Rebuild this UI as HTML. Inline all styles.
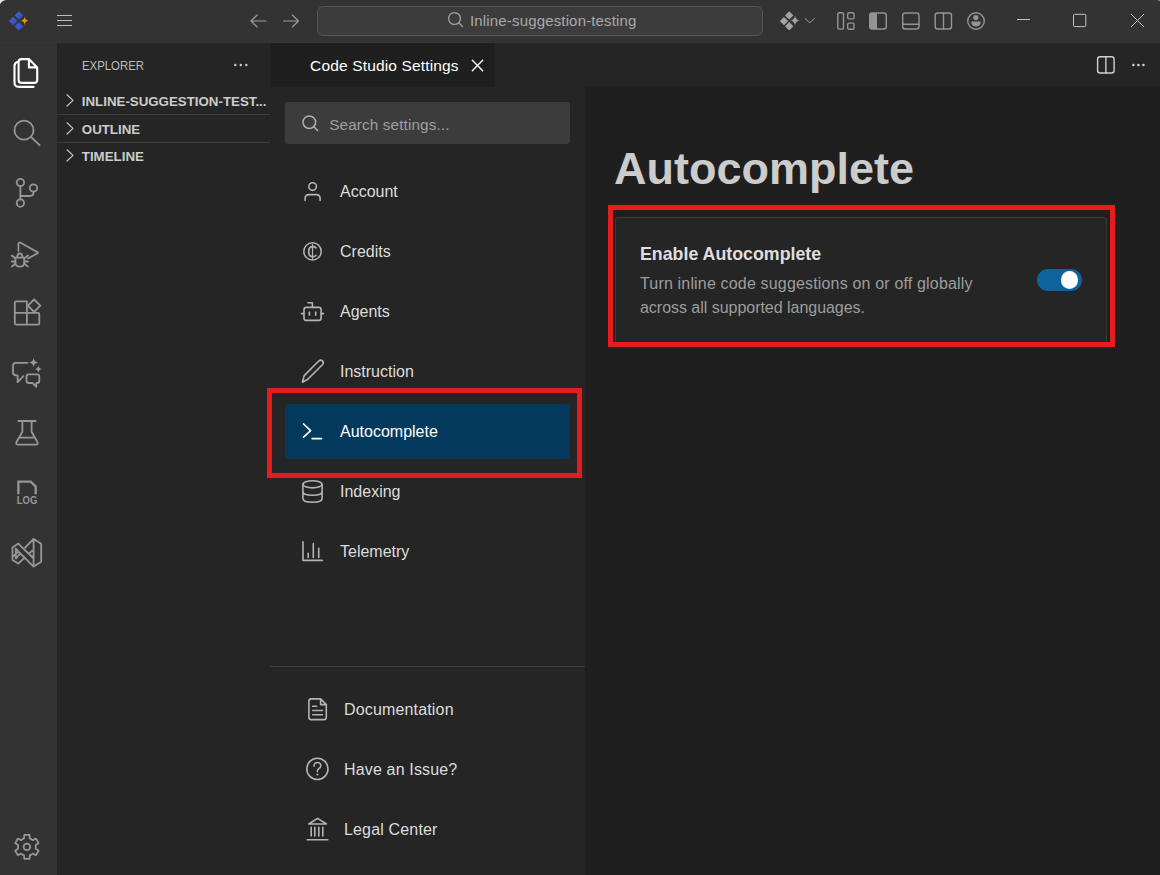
<!DOCTYPE html>
<html><head><meta charset="utf-8">
<style>
html,body{margin:0;padding:0;}
body{width:1160px;height:875px;position:relative;overflow:hidden;background:#1f1f1f;font-family:"Liberation Sans",sans-serif;}
.r{position:absolute;}
.t{position:absolute;white-space:nowrap;line-height:1;transform-origin:0 0;}
svg{position:absolute;left:0;top:0;}
</style></head><body>
<!-- regions -->
<div class="r" style="left:0;top:0;width:1160px;height:43px;background:#333333"></div>
<div class="r" style="left:0;top:43px;width:57px;height:832px;background:#333333"></div>
<div class="r" style="left:57px;top:43px;width:213px;height:832px;background:#252525"></div>
<div class="r" style="left:270px;top:43px;width:890px;height:44px;background:#252525"></div>
<div class="r" style="left:270px;top:43px;width:225px;height:44px;background:#1f1f1f"></div>
<div class="r" style="left:270px;top:87px;width:315px;height:788px;background:#252525"></div>
<div class="r" style="left:585px;top:87px;width:575px;height:788px;background:#1f1f1f"></div>

<div class="r" style="left:0;top:42px;width:1160px;height:1px;background:#363636"></div>
<div class="r" style="left:269px;top:43px;width:1px;height:832px;background:#272727"></div>
<!-- title search box -->
<div class="r" style="left:317px;top:6px;width:444px;height:28px;border:1px solid #555555;border-radius:6px;background:#3c3c3c"></div>
<!-- sidebar separators -->
<div class="r" style="left:57px;top:114px;width:213px;height:1px;background:#3c3c3c"></div>
<div class="r" style="left:57px;top:142px;width:213px;height:1px;background:#3c3c3c"></div>
<!-- settings search -->
<div class="r" style="left:285px;top:102px;width:285px;height:42px;border-radius:3px;background:#3c3c3c"></div>
<!-- active nav -->
<div class="r" style="left:285px;top:404px;width:285px;height:55px;border-radius:2px;background:#04395e"></div>
<!-- divider -->
<div class="r" style="left:270px;top:666px;width:315px;height:1px;background:#3c3c3c"></div>
<!-- card -->
<div class="r" style="left:615px;top:217px;width:490px;height:126px;border:1px solid #3a3a3a;border-radius:3px;background:#252525"></div>
<!-- toggle -->
<div class="r" style="left:1037px;top:269px;width:45px;height:22px;border-radius:11px;background:#0e639c"></div>
<div class="r" style="left:1060.8px;top:271px;width:17.5px;height:17.5px;border-radius:50%;background:#ffffff"></div>

<!-- texts -->
<div class="t" style="left:470px;top:13px;font-size:15px;color:#a9a9a9;letter-spacing:0.16px">Inline-suggestion-testing</div>
<div class="t" style="left:310.1px;top:58px;font-size:15.5px;color:#ffffff;letter-spacing:0.15px">Code Studio Settings</div>
<div class="t" style="left:81.7px;top:59px;font-size:13px;color:#bdbdbd;transform:scaleX(0.876)">EXPLORER</div>
<div class="t" style="left:81.8px;top:94.7px;font-size:13.3px;font-weight:bold;color:#cccccc">INLINE-SUGGESTION-TEST...</div>
<div class="t" style="left:81.8px;top:122.6px;font-size:13.3px;font-weight:bold;color:#cccccc">OUTLINE</div>
<div class="t" style="left:81.8px;top:149.7px;font-size:13.3px;font-weight:bold;color:#cccccc">TIMELINE</div>
<div class="t" style="left:329.2px;top:116.6px;font-size:15.3px;color:#9f9f9f;letter-spacing:0.12px">Search settings...</div>

<div class="t" style="left:340px;top:183.5px;font-size:16px;color:#dddddd">Account</div>
<div class="t" style="left:340px;top:243.5px;font-size:16px;color:#dddddd">Credits</div>
<div class="t" style="left:340px;top:303.5px;font-size:16px;color:#dddddd">Agents</div>
<div class="t" style="left:340px;top:363.5px;font-size:16px;color:#dddddd">Instruction</div>
<div class="t" style="left:340px;top:423.5px;font-size:16px;color:#ffffff">Autocomplete</div>
<div class="t" style="left:340px;top:483.5px;font-size:16px;color:#dddddd">Indexing</div>
<div class="t" style="left:340px;top:543.5px;font-size:16px;color:#dddddd">Telemetry</div>
<div class="t" style="left:344px;top:701.9px;font-size:16px;color:#dddddd;letter-spacing:0.16px">Documentation</div>
<div class="t" style="left:344px;top:761.9px;font-size:16px;color:#dddddd;letter-spacing:0.16px">Have an Issue?</div>
<div class="t" style="left:344px;top:821.9px;font-size:16px;color:#dddddd;letter-spacing:0.16px">Legal Center</div>

<div class="t" style="left:614px;top:145.7px;font-size:45px;font-weight:bold;color:#cccccc">Autocomplete</div>
<div class="t" style="left:640px;top:245.6px;font-size:17.8px;font-weight:bold;color:#dedede">Enable Autocomplete</div>
<div class="t" style="left:640px;top:276.1px;font-size:16px;color:#9d9d9d;letter-spacing:0.17px">Turn inline code suggestions on or off globally</div>
<div class="t" style="left:640px;top:300.1px;font-size:16px;color:#9d9d9d;letter-spacing:-0.03px">across all supported languages.</div>

<!-- red boxes -->
<div class="r" style="left:267px;top:388px;width:305px;height:80px;border:5px solid #e81c1c"></div>
<div class="r" style="left:608px;top:205px;width:497px;height:132px;border:5px solid #e81c1c"></div>

<svg width="1160" height="875" viewBox="0 0 1160 875" fill="none" stroke-linecap="round" stroke-linejoin="round">
<path d="M0,0 H6 Q2,0.6 0,4.2Z" fill="#e6e6e6"/>
<path d="M1160,0 H1156.6 Q1158.8,0.4 1160,1.6Z" fill="#8a8a8a"/>
<!-- logo -->
<defs><linearGradient id="lg" x1="0" y1="0" x2="1" y2="1"><stop offset="0" stop-color="#4566dc"/><stop offset="1" stop-color="#3049b4"/></linearGradient></defs>
<g fill="url(#lg)">
<path d="M19,11.2 L23.3,15.5 L19,19.8 L14.7,15.5Z"/>
<path d="M13.2,16.7 L17.5,21 L13.2,25.3 L8.9,21Z"/>
<path d="M19,22.1 L23.3,26.4 L19,30.7 L14.7,26.4Z"/>
</g>
<path fill="#f08a1a" d="M24.6,16.5 Q25.1,20.3 28.5,20.8 Q25.1,21.3 24.6,25.1 Q24.1,21.3 20.7,20.8 Q24.1,20.3 24.6,16.5Z"/>
<!-- hamburger -->
<g stroke="#bdbdbd" stroke-width="1.1" stroke-linecap="butt">
<path d="M57,15.5H72M57,20.5H72M57,25.5H72"/>
</g>
<!-- nav arrows -->
<g stroke="#9d9d9d" stroke-width="1.15">
<path d="M266,21H251M257.2,15L251,21L257.2,27"/>
<path d="M283.5,21H298.5M292.3,15L298.5,21L292.3,27"/>
</g>
<!-- title search icon -->
<g stroke="#a0a0a0" stroke-width="1.3">
<circle cx="454.5" cy="18.5" r="5.9"/>
<path d="M458.8,22.8L462.5,26.5"/>
</g>
<!-- copilot-ish gray -->
<g fill="#a3a3a3">
<path d="M789.2,11.2 L793.4,15.4 L789.2,19.6 L785,15.4Z"/>
<path d="M784,16.9 L788.2,21.1 L784,25.3 L779.8,21.1Z"/>
<path d="M789.2,22.1 L793.4,26.3 L789.2,30.5 L785,26.3Z"/>
<path d="M795,15.8 Q795.7,19.9 799.6,20.6 Q795.7,21.3 795,25.4 Q794.3,21.3 790.4,20.6 Q794.3,19.9 795,15.8Z"/>
</g>
<path d="M805,18.4L809.7,22.8L814.4,18.4" stroke="#a3a3a3" stroke-width="1"/>
<!-- layout icons -->
<g stroke="#949494" stroke-width="1.4">
<rect x="837.8" y="12.8" width="5.7" height="16.3" rx="1.3"/>
<rect x="847.7" y="12.7" width="6.3" height="6.2" rx="1.3"/>
<rect x="847.7" y="23.1" width="6.3" height="6.1" rx="1.3"/>
<rect x="869.7" y="13" width="16.6" height="16" rx="2.5"/>
<rect x="902.7" y="13" width="16.3" height="16" rx="2.5"/>
<path d="M902.7,24.2H919"/>
<rect x="935.2" y="13" width="16.3" height="16" rx="2.5"/>
<path d="M943.5,13V29"/>
<circle cx="976" cy="21" r="8.3"/>
</g>
<g fill="#949494">
<path d="M869.7,15.5 Q869.7,13 872.2,13 H877 V29 H872.2 Q869.7,29 869.7,26.5Z"/>
<circle cx="975.8" cy="17.5" r="2.6"/>
<path d="M971.6,21.5 H980.4 Q981,21.5 980.8,22.6 Q980,26.5 976,26.5 Q972,26.5 971.2,22.6 Q971,21.5 971.6,21.5Z"/>
</g>
<!-- window controls -->
<g stroke="#c3c3c3" stroke-width="1" stroke-linecap="butt">
<path d="M1017,19.5H1030"/>
<rect x="1073.5" y="14.3" width="12.3" height="12.3" rx="1"/>
<path d="M1131,14L1144,27M1144,14L1131,27"/>
</g>

<!-- activity bar: explorer -->
<g stroke="#ffffff" stroke-width="2.1">
<path d="M28.9,59.1H21.6Q18.6,59.1 18.6,62.1V79.9Q18.6,82.9 21.6,82.9H34.2Q37.2,82.9 37.2,79.9V67.4L28.9,59.1V67.4H37.2"/>
<path d="M17.4,61.9Q14.5,62.8 14.5,66V82.5Q14.5,86.9 18.9,86.9H33.5"/>
</g>
<g stroke="#979797" stroke-width="1.8">
<!-- search -->
<circle cx="24" cy="130.2" r="9.5"/>
<path d="M31.2,137.2L39.6,145.2"/>
<!-- scm -->
<circle cx="20.4" cy="182.5" r="3.7"/>
<circle cx="20.4" cy="203.1" r="3.7"/>
<circle cx="33.5" cy="188" r="3.7"/>
<path d="M20.4,186.2V199.4"/>
<path d="M33.5,191.7V192.8Q33.5,196 30.3,196H20.4"/>
<!-- debug -->
<path d="M18.4,250.8V244.2Q18.4,241.8 20.6,242.8L37.6,252.3Q38.4,252.8 37.6,253.3L28.2,258.4"/>
<path d="M17.3,257Q17.3,253.5 19.85,253.5Q22.4,253.5 22.4,257"/>
<path d="M15.5,257.7H24.2M15.5,257.7V262.4Q15.5,266.6 19.8,266.6Q24.2,266.6 24.2,262.4V257.7"/>
<path d="M11.8,255.5L15.2,258.3M11.8,261.5H15.2M11.8,266.6L15.2,263.8M27.9,255.5L24.5,258.3M27.9,261.5H24.5M27.9,266.6L24.5,263.8"/>
<!-- extensions -->
<path d="M26.9,312.9V301.3H16.2Q14.8,301.3 14.8,302.7V323.2Q14.8,324.6 16.2,324.6H37.9Q39.3,324.6 39.3,323.2V314.3Q39.3,312.9 37.9,312.9H14.8M26.9,312.9V324.6"/>
<path d="M34.1,299.5L40.3,305.7L34.1,311.9L27.9,305.7Z"/>
<!-- chat -->
<path d="M27.3,362.8H16Q13,362.8 13,365.8V372.3Q13,375.3 16,375.3H17.6V382.2L23.4,376.2"/>
<path d="M29.3,374.3H37Q39.3,374.3 39.3,376.6V380.7Q39.3,383 37,383H36.3V386.8L32.6,383H28.8Q26.5,383 26.5,380.7V376.6Q26.5,374.3 28.8,374.3"/>
<!-- flask -->
<path d="M18.4,421H35.6M22.4,421V431.8L16.4,442.2Q15.6,444.6 18,444.6H35.9Q38.3,444.6 37.5,442.2L31.6,431.8V421M20.4,437.6H33.5"/>
<!-- vs -->
<path d="M33.6,538.9L41.2,543.8V561.7L33.6,566.6L18.3,551.5L13.2,556.5M33.6,538.9V566.6M33.6,538.9L25.2,547.5M18.3,543.6L12.5,547.4V559.9L18.3,563.6L24.8,557.3M18.3,543.6L33.6,558.5M15.8,548.5V558.6L20.3,553.6ZM33.6,549.6L28.7,553.8L33.6,557.8"/>
</g>
<g fill="#979797">
<path d="M33.6,357.8Q34.1,362.1 38.4,362.6Q34.1,363.1 33.6,367.4Q33.1,363.1 28.8,362.6Q33.1,362.1 33.6,357.8Z"/>
<path d="M38.4,365.3Q38.8,368.7 42.2,369.1Q38.8,369.5 38.4,372.9Q38,369.5 34.6,369.1Q38,368.7 38.4,365.3Z"/>
</g>
<g stroke="#979797" stroke-width="2.3" stroke-linecap="butt" stroke-linejoin="miter">
<path d="M18.4,494.2V481.6H30.7L35.7,486.6V494.2"/>
</g>
<text x="16.8" y="504.2" font-family="Liberation Sans" font-weight="bold" font-size="10.5" fill="#979797" textLength="20.5" lengthAdjust="spacingAndGlyphs">LOG</text>
<!-- gear -->
<g stroke="#979797" stroke-width="1.8">
<path d="M22.45,839.19 L24.00,838.48 L24.34,834.87 L29.46,834.87 L29.80,838.48 L31.35,839.19 L32.74,840.18 L36.04,838.67 L38.60,843.10 L35.64,845.20 L35.80,846.90 L35.64,848.60 L38.60,850.70 L36.04,855.13 L32.74,853.62 L31.35,854.61 L29.80,855.32 L29.46,858.93 L24.34,858.93 L24.00,855.32 L22.45,854.61 L21.06,853.62 L17.76,855.13 L15.20,850.70 L18.16,848.60 L18.00,846.90 L18.16,845.20 L15.20,843.10 L17.76,838.67 L21.06,840.18Z"/>
<circle cx="26.9" cy="846.9" r="3.3"/>
</g>

<!-- sidebar -->
<g stroke="#c5c5c5" stroke-width="1.2">
<path d="M67,94.8L73,100.4L67,106M67,122.8L73,128.4L67,134M67,149.8L73,155.4L67,161"/>
</g>
<g fill="#c5c5c5">
<circle cx="235.3" cy="65" r="1.25"/><circle cx="240.8" cy="65" r="1.25"/><circle cx="246.3" cy="65" r="1.25"/>
</g>
<!-- tab close -->
<path d="M472.3,60.3L482.7,70.7M482.7,60.3L472.3,70.7" stroke="#ffffff" stroke-width="1.4"/>
<!-- editor actions -->
<g stroke="#d0d0d0" stroke-width="1.4">
<rect x="1097.6" y="56.7" width="16.5" height="16.3" rx="2.5"/>
<path d="M1105.9,56.7V73"/>
</g>
<g fill="#d0d0d0">
<circle cx="1133.4" cy="65" r="1.3"/><circle cx="1138.4" cy="65" r="1.3"/><circle cx="1143.4" cy="65" r="1.3"/>
</g>

<!-- settings search icon -->
<g stroke="#b0b0b0" stroke-width="1.5">
<circle cx="309.3" cy="122.2" r="6.3"/>
<path d="M313.9,126.8L317.6,130.6"/>
</g>
<!-- nav icons -->
<g stroke="#b4b4b4" stroke-width="1.6">
<circle cx="312.6" cy="186.6" r="3.8"/>
<path d="M305.1,200.4V198.6Q305.1,194.6 309.1,194.6H316.1Q320.1,194.6 320.1,198.6V200.4"/>
<circle cx="312.5" cy="251.4" r="8.7" stroke-width="1.5"/>
<path d="M315.9,247.9Q314.7,246.7 312.9,246.7Q308.7,246.7 308.7,251.7Q308.7,256.7 312.9,256.7Q314.7,256.7 315.9,255.5" stroke-width="1.7"/>
<path d="M312.5,244.6V258.4" stroke-width="1.2"/>
<rect x="304" y="307.4" width="17.1" height="13" rx="2.2"/>
<path d="M308,302.8H312.4V307.4M301.5,313.6H304M321.1,313.6H323.6"/>
<path d="M309.4,312V315.2M315.7,312V315.2"/>
<path d="M302.4,382.2L304.2,375.6L319,360.8Q320.8,359.3 322.6,361.1Q324.1,362.8 322.6,364.5L307.8,379.3Z"/>
<path d="M302.5,480.8" />
<ellipse cx="312.5" cy="484.3" rx="9.6" ry="3.6"/>
<path d="M302.9,484.3V498.6Q302.9,502.3 312.5,502.3Q322.1,502.3 322.1,498.6V484.3M302.9,491.5Q302.9,495.2 312.5,495.2Q322.1,495.2 322.1,491.5"/>
<path d="M303,541.8V560.4H322.2M308.2,553.4V557.4M313.3,543.6V557.4M318.7,548.2V557.4"/>
<!-- bottom -->
<path d="M320.6,698.9H311.3Q308.9,698.9 308.9,701.3V717.2Q308.9,719.6 311.3,719.6H323.9Q326.3,719.6 326.3,717.2V704.6Z M320.6,698.9V704.6H326.3"/>
<path d="M312.6,706.2H316.8M312.6,710.5H322.6M312.6,714.7H322.6" stroke-width="1.4"/>
<circle cx="317.4" cy="768.9" r="10.6"/>
<path d="M314,766.2Q314,762.6 317.4,762.6Q320.8,762.6 320.8,765.8Q320.8,767.8 318.6,768.8Q317.4,769.4 317.4,770.9V771.4" stroke-width="1.5"/>
<path d="M308.8,824H326.4L317.6,818.4Z M311.2,827.3V835.9M314.8,827.3V835.9M318.8,827.3V835.9M322.8,827.3V835.9M307.2,839.7H327.8"/>
</g>
<circle cx="317.4" cy="774.6" r="1" fill="#b4b4b4"/>
<g stroke="#ffffff" stroke-width="1.7">
<path d="M303.6,424L310.6,430.6L303.6,437.2M312.1,438.6H321.5"/>
</g>
</svg>
</body></html>
